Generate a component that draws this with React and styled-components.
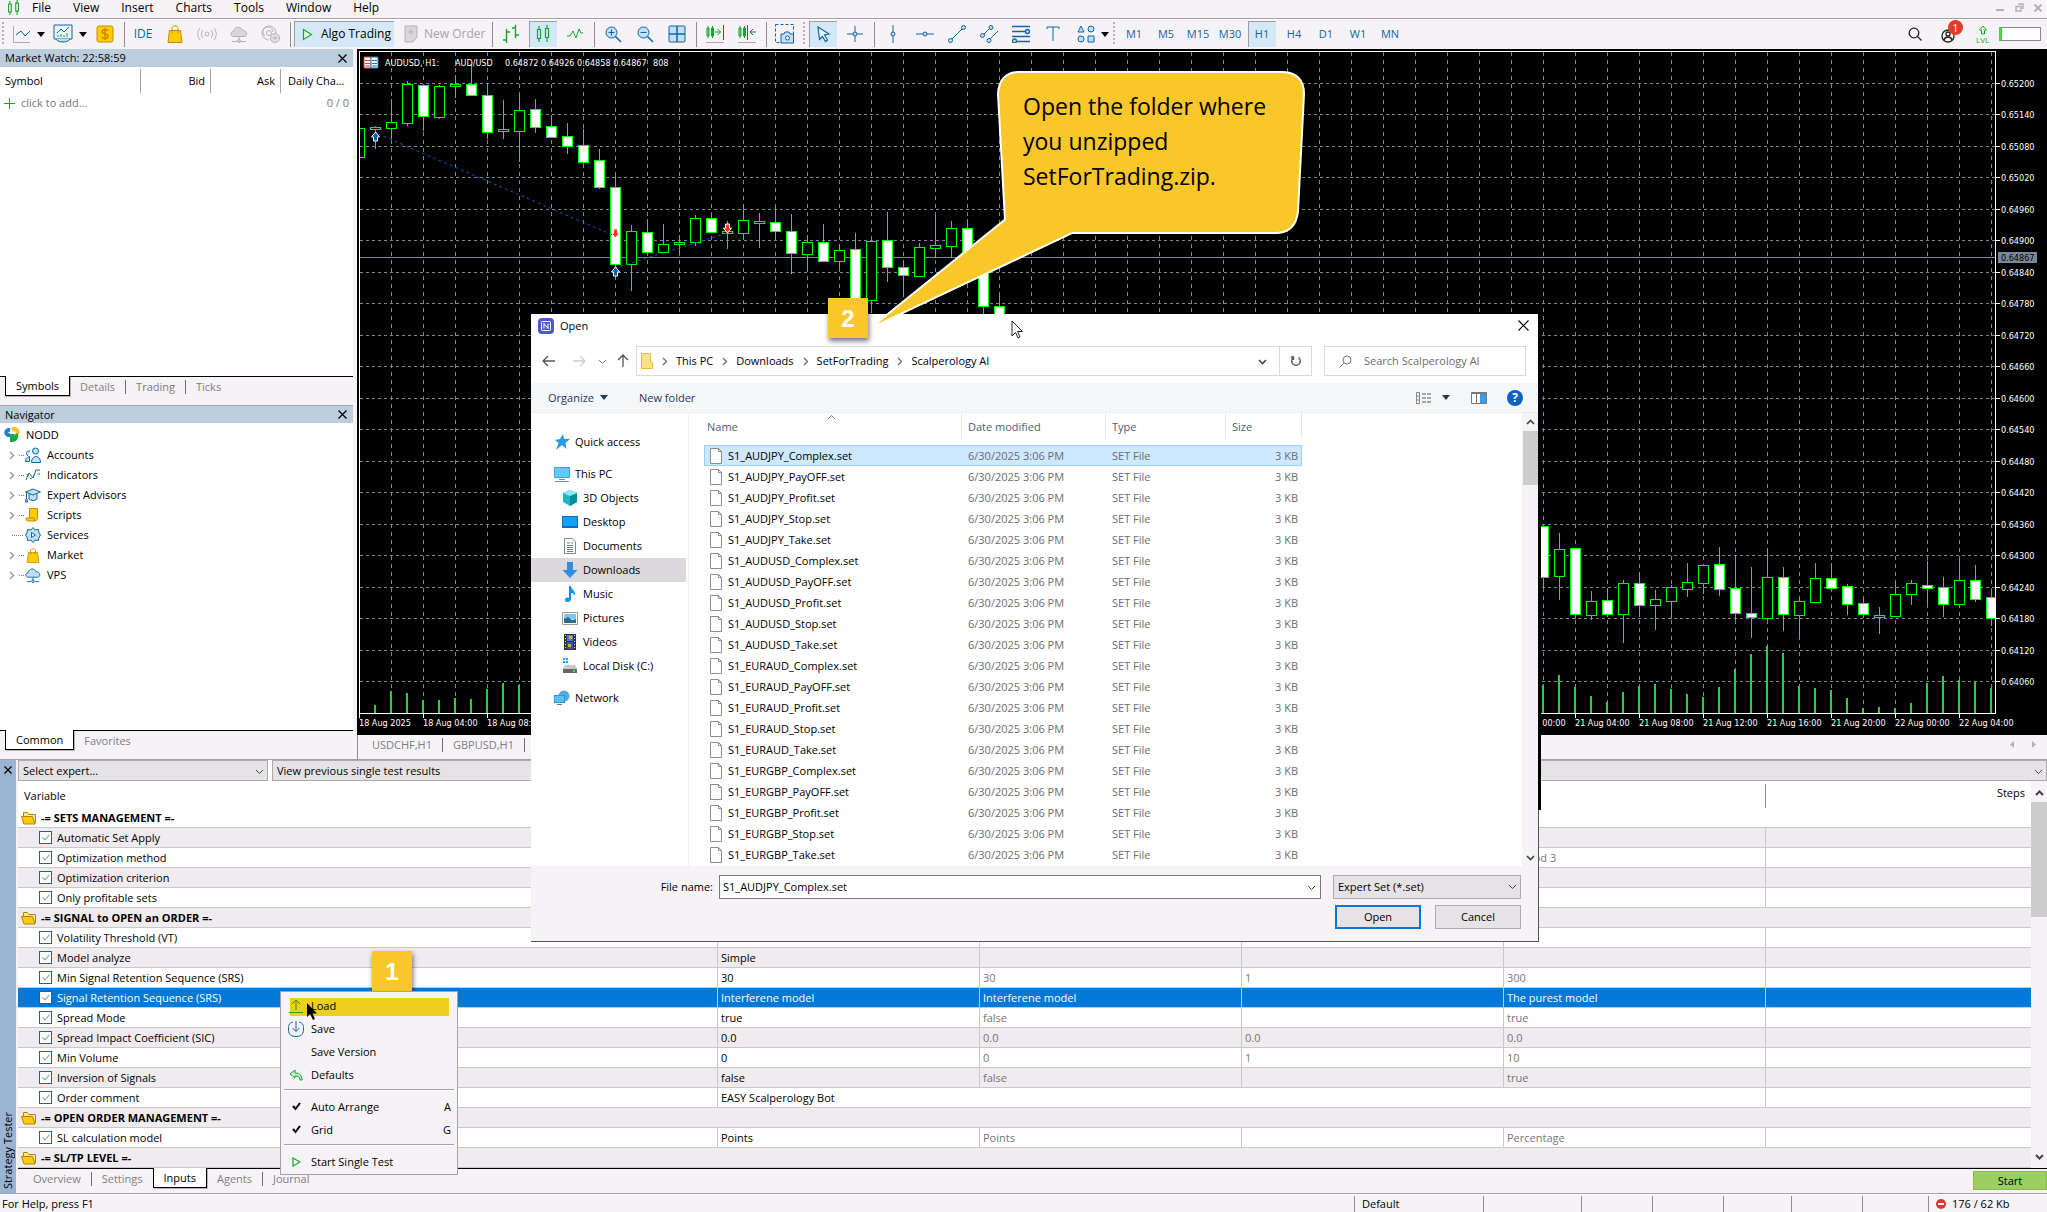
import React from 'react';
import styled, { createGlobalStyle, css } from 'styled-components';

const GlobalStyle = createGlobalStyle`
  * {
    box-sizing: border-box;
  }
  body {
    margin: 0;
    background: #f6f3f6;
    color: #000;
    font-family: 'Open Sans', 'Noto Sans', sans-serif;
    font-size: 11px;
    line-height: 16px;
  }
  button, input, select {
    font: inherit;
    color: inherit;
    margin: 0;
    padding: 0;
    border: 0;
    border-radius: 0;
    background: none;
    outline: none;
  }
  table {
    border-collapse: separate;
    border-spacing: 0;
    table-layout: fixed;
  }
  th, td {
    padding: 0;
    font-weight: 400;
    text-align: left;
    white-space: nowrap;
  }
  ul {
    margin: 0;
    padding: 0;
    list-style: none;
  }
  svg {
    display: block;
    flex: none;
  }
`;

const BLUE = '#1464a0';
const GREEN = '#10a828';
const PALE = '#bfe0f8';

/* ---------- shell ---------- */

const Page = styled.div`
  position: relative;
  display: flex;
  flex-direction: column;
  min-height: 100vh;
  overflow: hidden;
`;

const MenuBar = styled.nav`
  display: flex;
  align-items: center;
  height: 20px;
  padding: 0 5px 4px 6px;
  border-bottom: 1px solid #fff;
  box-shadow: inset 0 -1px 0 #a3a1a3;
`;

const MenuItem = styled.button`
  padding: 0 11px;
  font-size: 12px;
  line-height: 16px;
`;

const WindowButtons = styled.div`
  display: flex;
  gap: 10px;
  margin-left: auto;
`;

const ToolBar = styled.div`
  display: flex;
  align-items: center;
  height: 29px;
  padding-bottom: 1px;
`;

const Tool = styled.button`
  display: flex;
  align-items: center;
  justify-content: center;
  width: 28px;
  height: 26px;
  margin: 0 2px;
  color: ${BLUE};
  font-size: ${(p) => (p.$big ? '12px' : '11px')};
  ${(p) => p.$on && css`
    background: #d5e8f8;
    box-shadow: inset 1px 1px 0 #9d9da3;
  `}
`;

const DropTool = styled.button`
  display: flex;
  align-items: center;
  gap: 6px;
  width: ${(p) => p.$w}px;
  height: 26px;
  padding-left: 8px;
`;

const LabelTool = styled.button`
  display: flex;
  align-items: center;
  gap: ${(p) => (p.$on ? 8 : 6)}px;
  width: ${(p) => (p.$on ? 100 : 92)}px;
  height: 26px;
  margin: 0 1px;
  padding-left: 8px;
  font-size: 12px;
  white-space: nowrap;
  color: ${(p) => (p.$on ? '#000' : '#a5a3a5')};
  ${(p) => p.$on && css`
    background: #d5e8f8;
    box-shadow: inset 1px 1px 0 #9d9da3;
  `}
`;

const Split = styled.span`
  width: 6px;
  height: 25px;
  background: linear-gradient(#8f8d90, #8f8d90) center / 1px 100% no-repeat;
`;

const Grip = styled.span`
  width: ${(p) => p.$w || 6}px;
  height: 24px;
  background: repeating-linear-gradient(#b5b3b5 0 2px, transparent 2px 4px) center / 2px 100% no-repeat;
`;

const Spacer = styled.span`
  flex: 1;
`;

const Account = styled.button`
  position: relative;
  width: 22px;
  height: 22px;
  margin: 0 15px 0 17px;
`;

const Badge = styled.span`
  position: absolute;
  top: -3px;
  left: 9px;
  width: 15px;
  height: 15px;
  border-radius: 8px;
  background: #e53a23;
  color: #fff;
  line-height: 15px;
  text-align: center;
`;

const Level = styled.div`
  width: 42px;
  height: 14px;
  margin: 0 6px 0 9px;
  border: 1px solid #8a888a;
  border-left: 3px solid #3ddc3d;
  background: #fff;
`;

const Middle = styled.div`
  display: flex;
  flex: 1;
`;

const Side = styled.aside`
  display: flex;
  flex-direction: column;
  width: 353px;
  margin-right: 4px;
`;

const PanelTitle = styled.h2`
  display: flex;
  align-items: center;
  justify-content: space-between;
  height: 18px;
  margin: 0;
  padding: 0 6px 0 5px;
  background: #bccddd;
  font-size: 11px;
  font-weight: 400;
  border-top: ${(p) => (p.$line ? '1px solid #a3a1a3' : '0')};
`;

const Watch = styled.div`
  height: 309px;
  padding-top: 2px;
  background: #fff;
`;

const WatchTable = styled.table`
  width: 100%;
  th {
    height: 24px;
    padding: 0 5px;
  }
  th + th {
    border-left: 1px solid #a3a1a3;
    text-align: right;
  }
  th:last-child {
    padding: 0 0 0 7px;
    text-align: left;
  }
  td {
    height: 20px;
    padding: 0 4px;
    color: #77757a;
  }
  td:last-child {
    text-align: right;
  }
`;

const AddRow = styled.span`
  display: flex;
  align-items: center;
  gap: 6px;
`;

const Tree = styled.div`
  flex: 1;
  padding-top: 2px;
  background: #fff;
`;

const TreeRow = styled.div`
  display: grid;
  grid-template-columns: ${(p) => (p.$root ? '22px auto' : '12px 6px 22px auto')};
  align-items: center;
  justify-content: start;
  height: 20px;
  padding-left: ${(p) => (p.$root ? 4 : 7)}px;
`;

const Dots = styled.span`
  width: ${(p) => (p.$long ? 11 : 5)}px;
  margin-left: ${(p) => (p.$long ? -7 : 0)}px;
  border-top: 1px dotted #777;
`;

const Tabs = styled.div`
  display: flex;
  align-items: flex-start;
  height: ${(p) => (p.$tall ? 29 : 24)}px;
  padding-left: 5px;
  border-top: ${(p) => (p.$plain ? '0' : '1px solid #000')};
`;

const Tab = styled.button`
  height: 19px;
  padding: 0 10px;
  color: ${(p) => (p.$on ? '#000' : '#807e82')};
  ${(p) => p.$on && css`
    margin-top: -1px;
    height: 20px;
    border: 1px solid #000;
    border-top: 0;
    background: #fff;
    box-shadow: 1px 1px 0 #b5b3b5;
  `}
`;

const TabLine = styled.span`
  width: 1px;
  height: 14px;
  margin-top: 3px;
  background: #706e72;
`;

const ChartArea = styled.main`
  flex: 1;
  min-width: 0;
  background: #f6f3f6;
  svg.chart {
    width: 100%;
    height: 686px;
    background: #000;
  }
`;

const ChartTabs = styled.div`
  display: flex;
  height: 24px;
  padding-left: 4px;
  border-left: 1px solid #8f8d90;
`;

const ChartScroll = styled.div`
  display: flex;
  align-items: center;
  gap: 16px;
  margin: 0 11px 6px auto;
`;

/* ---------- strategy tester ---------- */

const Tester = styled.section`
  display: flex;
  border-top: 1px solid #a3a1a3;
  border-bottom: 1px solid #a3a1a3;
`;

const Strip = styled.div`
  display: flex;
  flex-direction: column;
  align-items: center;
  justify-content: space-between;
  width: 16px;
  padding: 6px 0 4px;
  background: #9cb4d4;
  span {
    writing-mode: vertical-rl;
    transform: rotate(180deg);
  }
`;

const TesterMain = styled.div`
  flex: 1;
  min-width: 0;
  padding-left: 2px;
`;

const Pickers = styled.div`
  display: flex;
  gap: 4px;
  background: #fff;
`;

const SelectBox = styled.label`
  display: flex;
  position: relative;
  flex: ${(p) => (p.$w ? `0 0 ${p.$w}px` : '1')};
  select {
    appearance: none;
    width: 100%;
    height: ${(p) => p.$h || 21}px;
    padding-left: 4px;
    border: 1px solid #adabad;
    background: #e6e3e6;
  }
  svg {
    position: absolute;
    right: 4px;
    top: 7px;
  }
`;

const Inputs = styled.div`
  display: flex;
  background: #fff;
`;

const InputTable = styled.table`
  flex: 1;
  width: 100%;
  th {
    height: 27px;
    padding: 3px 6px 0;
  }
  th:last-child {
    text-align: right;
  }
  th:last-child::before {
    content: '';
    float: left;
    width: 1px;
    height: 24px;
    margin: -1px 0 0 -6px;
    background: #8f8d90;
  }
`;

const Row = styled.tr`
  background: ${(p) => (p.$selected ? '#0478d7' : p.$odd ? '#efebef' : '#fff')};
  color: ${(p) => (p.$selected ? '#fff' : '#000')};
  td {
    height: 20px;
    padding-left: 3px;
    border-bottom: 1px solid #cac7ca;
  }
  td + td {
    border-left: 1px solid #cac7ca;
  }
  td:nth-child(n + 3) {
    color: ${(p) => (p.$selected ? '#fff' : '#77757a')};
  }
`;

const Group = styled.div`
  display: flex;
  align-items: center;
  gap: 4px;
  font-weight: 700;
`;

const Check = styled.label`
  display: flex;
  align-items: center;
  gap: 5px;
  padding-left: 18px;
  input {
    appearance: none;
    position: relative;
    width: 13px;
    height: 13px;
    border: 1px solid ${BLUE};
    background: #fff;
  }
  input:checked::after {
    content: '';
    position: absolute;
    left: 4px;
    top: 1px;
    width: 3px;
    height: 6px;
    border: solid #9a989c;
    border-width: 0 1px 1px 0;
    transform: rotate(42deg);
  }
`;

const Scroll = styled.div`
  display: flex;
  flex-direction: column;
  align-items: center;
  width: 16px;
  padding: ${(p) => (p.$inset ? 3 : 0)}px 0 ${(p) => (p.$inset ? 3 : 0)}px;
  background: #f6f3f6;
  svg {
    margin: 5px 0 4px;
  }
  i {
    width: ${(p) => (p.$inset ? 16 : 15)}px;
    height: ${(p) => p.$thumb}px;
    margin-bottom: auto;
    background: #cdcdcd;
  }
`;

const TesterFoot = styled.div`
  display: flex;
  border-top: 1px solid #000;
  & > div {
    flex: 1;
  }
`;

const StartButton = styled.button`
  width: 74px;
  height: 19px;
  margin-top: 2px;
  border: 1px solid #86c04a;
  background: #9ccf62;
`;

const Status = styled.footer`
  display: flex;
  align-items: center;
  height: 18px;
  padding-left: 2px;
  border-top: 1px solid #fff;
`;

const StatusCell = styled.span`
  display: flex;
  align-items: center;
  gap: 6px;
  width: ${(p) => p.$w}px;
  height: 16px;
  padding-left: 7px;
  border-left: 1px solid #8f8d90;
`;

/* ---------- floating parts ---------- */

const Popup = styled.div`
  position: absolute;
  left: 280px;
  top: 991px;
  width: 178px;
  padding: 2px 3px 1px;
  border: 1px solid #a3a1a3;
  background: #f6f3f6;
`;

const PopupItem = styled.button`
  display: flex;
  align-items: center;
  width: 100%;
  height: 23px;
  padding-right: 3px;
  i {
    display: flex;
    justify-content: center;
    width: 26px;
    margin-right: 1px;
    padding-right: 2px;
  }
  ${(p) => p.$hot && css`
    background: linear-gradient(#edd01c, #edd01c) 6px 4px / 159px 18px no-repeat;
  `}
  kbd {
    margin-left: auto;
    font: inherit;
  }
`;

const PopupLine = styled.hr`
  height: 2px;
  margin: 3px 0 4px;
  border: 0;
  border-top: 1px solid #a3a1a3;
  border-bottom: 1px solid #fff;
`;

const Pin = styled.div`
  position: absolute;
  left: ${(p) => p.$x}px;
  top: ${(p) => p.$y}px;
  width: 40px;
  height: 40px;
  background: #f9c72a;
  box-shadow: 1px 3px 5px rgba(0, 0, 0, 0.55);
  color: #fff;
  font: 700 24px/41px 'Liberation Sans', sans-serif;
  text-align: center;
`;

const Callout = styled.div`
  position: absolute;
  left: 870px;
  top: 66px;
  width: 440px;
  height: 264px;
  svg {
    position: absolute;
    inset: 0;
    overflow: visible;
  }
  p {
    position: relative;
    width: 260px;
    margin: 0 0 0 153px;
    padding-top: 23px;
    font-size: 23px;
    font-weight: 500;
    line-height: 35px;
  }
`;

const Pointer = styled.svg`
  position: absolute;
  left: ${(p) => p.$x}px;
  top: ${(p) => p.$y}px;
`;

const Dialog = styled.section`
  position: absolute;
  left: 531px;
  top: 314px;
  width: 1008px;
  border-right: 1px solid #555;
  border-bottom: 1px solid #555;
  background: #fff;
  &::after {
    content: '';
    position: absolute;
    left: 100%;
    top: 0;
    width: 3px;
    height: 496px;
    background: #000;
  }
`;

const DialogTitle = styled.header`
  display: flex;
  align-items: center;
  gap: 6px;
  height: 32px;
  padding: 0 9px 9px 7px;
  button {
    margin-left: auto;
  }
`;

const Address = styled.div`
  display: flex;
  align-items: center;
  height: 30px;
  margin-bottom: 7px;
  padding: 0 12px 0 11px;
`;

const NavButton = styled.button`
  width: ${(p) => p.$w}px;
  height: 20px;
  display: flex;
  align-items: center;
`;

const Crumbs = styled.div`
  display: flex;
  align-items: center;
  flex: 1;
  height: 30px;
  margin-right: 12px;
  padding-left: 4px;
  border: 1px solid #d9d9d9;
  a {
    color: inherit;
    text-decoration: none;
  }
  & > svg + svg, & > a + svg {
    margin: 0 7px;
  }
`;

const CrumbEnd = styled.button`
  display: flex;
  align-items: center;
  justify-content: center;
  width: ${(p) => (p.$first ? 33 : 32)}px;
  height: 28px;
  margin-left: ${(p) => (p.$first ? 'auto' : 0)};
  border-left: ${(p) => (p.$first ? '0' : '1px solid #d9d9d9')};
`;

const Search = styled.label`
  display: flex;
  align-items: center;
  gap: 12px;
  width: 202px;
  height: 30px;
  padding-left: 14px;
  border: 1px solid #d9d9d9;
  input {
    width: 150px;
  }
  input::placeholder {
    color: #6d6d6d;
    opacity: 1;
  }
`;

const Commands = styled.div`
  display: flex;
  align-items: center;
  height: 30px;
  padding: 0 15px 0 17px;
  background: #f5f6f7;
  border-bottom: 1px solid #ececee;
  color: #1e395b;
  button {
    display: flex;
    align-items: center;
    gap: 6px;
    margin-right: 31px;
  }
  button:nth-child(4) {
    gap: 10px;
    margin-right: 21px;
  }
  button:nth-child(5) {
    margin-right: 20px;
  }
  button:last-child {
    margin-right: 0;
  }
`;

const Body = styled.div`
  display: flex;
  height: 453px;
`;

const Places = styled.ul`
  width: 158px;
  padding-top: 17px;
  border-right: 1px solid #f2f2f2;
`;

const Place = styled.li`
  display: flex;
  align-items: center;
  gap: 5px;
  width: 155px;
  height: 24px;
  margin-top: ${(p) => (p.$gap ? 8 : 0)}px;
  padding-left: ${(p) => (p.$deep ? 31 : 23)}px;
  background: ${(p) => (p.$on ? '#dcd9dc' : 'none')};
`;

const Files = styled.table`
  width: 598px;
  margin: 0 auto 0 15px;
  align-self: flex-start;
  td {
    height: 21px;
    padding-left: 6px;
    color: #6d6d6d;
  }
  td:first-child {
    color: #000;
  }
  td:last-child {
    padding-right: 4px;
    text-align: right;
  }
`;

const HeadCell = styled.div`
  position: relative;
  height: 25px;
  margin-bottom: 7px;
  padding: 6px 0 0 ${(p) => (p.$first ? 3 : 6)}px;
  border-right: 1px solid #e3e3e3;
  color: #4c607a;
  svg {
    position: absolute;
    left: calc(50% - 6px);
    top: 0;
  }
`;

const FileRow = styled.tr`
  ${(p) => p.$on && css`
    background: #cde8ff;
    outline: 1px solid #99d1ff;
    outline-offset: -1px;
  `}
`;

const FileName = styled.span`
  display: flex;
  align-items: center;
  gap: 6px;
`;

const DialogFoot = styled.footer`
  padding: 9px 17px 12px 0;
  background: #f6f3f6;
`;

const FootLine = styled.div`
  display: flex;
  align-items: center;
  justify-content: flex-end;
  gap: ${(p) => p.$gap}px;
  margin-bottom: ${(p) => (p.$last ? 0 : 6)}px;
`;

const NameBox = styled.label`
  display: flex;
  align-items: center;
  gap: 6px;
  span {
    display: flex;
    align-items: center;
    width: 602px;
    height: 24px;
    padding: 0 4px 0 3px;
    border: 1px solid #7a7a7a;
    background: #fff;
  }
  input {
    flex: 1;
  }
`;

const DialogButton = styled.button`
  width: 86px;
  height: 24px;
  border: ${(p) => (p.$main ? '2px solid #0078d7' : '1px solid #adadad')};
  background: #e6e3e6;
`;

/* ---------- icons ---------- */

const Icon = ({ w = 18, h = 18, stroke = BLUE, fill = 'none', sw = 1, children }) => (
  <svg width={w} height={h} viewBox={`0 0 ${w} ${h}`} fill={fill} stroke={stroke} strokeWidth={sw}>
    {children}
  </svg>
);

const Caret = ({ color = '#000' }) => (
  <Icon w={8} h={5} stroke="none" fill={color}><path d="M0 0h8L4 5z" /></Icon>
);

const Chevron = ({ dir = 'down', color = '#444', sw = 1 }) => {
  const turn = { down: 0, up: 180, right: -90, left: 90 }[dir];
  return (
    <Icon w={9} h={9} stroke={color} sw={sw}>
      <path d="M1 3l3.500 3.500L8 3" transform={`rotate(${turn} 4.500 4.500)`} />
    </Icon>
  );
};

const Cross = ({ size = 9, color = '#000', sw = 1.3 }) => (
  <Icon w={size} h={size} stroke={color} sw={sw}>
    <path d={`M.5 .5L${size - 0.5} ${size - 0.5}M${size - 0.5} .5L.5 ${size - 0.5}`} />
  </Icon>
);

const Candles = ({ w = 14, h = 18 }) => (
  <svg width={w} height={h} viewBox="0 0 14 18" fill="none" stroke={GREEN} strokeWidth="1.200">
    <path d="M1.500 4.500h3v9h-3zM3 1v3.500M3 13.500V17M9.500 3.500h3v9h-3zM11 0v3.500M11 12.500V17" />
  </svg>
);

const Play = () => (
  <Icon w={11} h={13} stroke={GREEN} sw={1.2}><path d="M1.500 1.500v10l8-5z" fill="#e5f9e8" /></Icon>
);

const Bag = ({ w = 16, h = 18 }) => (
  <svg width={w} height={h} viewBox="0 0 16 18" fill="#fc0" stroke="#c98a00">
    <path d="M2.500 5.500h11l1.500 12H1z" />
    <path d="M5 8V3.500C5 0 11 0 11 3.500V8" fill="none" />
  </svg>
);

const CloudIcon = ({ color = BLUE, fill = PALE, size = 18 }) => (
  <svg width={size} height={size} viewBox="0 0 18 18" stroke={color} fill={fill}>
    <path d="M4 11.500C0 11.500 0 6.500 3.500 6.500 4 1.500 11 .5 12.500 5.500c5-.5 5.500 6 1.500 6z" />
    <path d="M9 12v3M2 16.500h5M11 16.500h5" />
    <circle cx="9" cy="16" r="1.500" />
  </svg>
);

const Lens = ({ sign }) => (
  <Icon>
    <circle cx="7.500" cy="7.500" r="5.500" fill={PALE} />
    <path d="M11.500 11.500L17 17" strokeWidth="1.600" />
    <path d={sign === '+' ? 'M4.500 7.500h6M7.500 4.500v6' : 'M4.500 7.500h6'} />
  </Icon>
);

const Folder = () => (
  <Icon w={16} h={14} stroke="#b98500" fill="#fc0">
    <path d="M2.500 11V1.500h4l1.500 2h6.500V12" fill="#f4e3ad" />
    <path d="M.5 5.500h11l2.500 7.500H3z" />
  </Icon>
);

const PageIcon = () => (
  <Icon w={12} h={16} stroke="#8d8d8d" fill="#fff"><path d="M.5 .5h8l3 3v12H.5zM8.500 .5v3h3" /></Icon>
);

const Tick = () => (
  <Icon w={9} h={9} stroke="#000" sw={2}><path d="M1 4l2.500 3L8 1" /></Icon>
);

const Arrow = ({ d, color = '#555', sw = 1.3 }) => (
  <Icon w={14} h={14} stroke={color} sw={sw}><path d={d} /></Icon>
);

const placeIcons = {
  'Quick access': <path d="M9 0l1 5h6l-4.500 4L12.500 15 8 11l-6 5 2.500-7L1 6l5-1z" fill="#2c98e8" />,
  'This PC': (
    <>
      <path d="M0 1h16v11H0z" fill="#35a8e0" />
      <path d="M1 2h14v9H1z" fill="#62c8f5" />
      <path d="M5 13h6v1H5zM1 15h14v1H1z" fill="#789" />
    </>
  ),
  '3D Objects': (
    <>
      <path d="M8 0l7 3v9l-7 4-7-4V3z" fill="#1cb8c8" />
      <path d="M8 6l7-3v9l-7 4z" fill="#0a8ca0" />
      <path d="M8 0l7 3-7 3-7-3z" fill="#8de8ee" />
    </>
  ),
  Desktop: (
    <>
      <path d="M0 2h16v12H0z" fill="#0a6fc0" />
      <path d="M1 3h14v9H1z" fill="#14a0f8" />
    </>
  ),
  Documents: (
    <>
      <path d="M2.500 .5h8l3 3v12h-11z" fill="#fff" stroke="#888" />
      <path d="M5 5h3M5 7.500h6M5 9.500h6M5 11.500h6M5 13.500h6M9 5h2" stroke="#3b8fd0" />
    </>
  ),
  Downloads: <path d="M5 0h6v8h4.500L8 16 .5 8H5z" fill="#2f8ee0" />,
  Music: <path d="M7 0h2c0 4 5 4 4 10-1-3-3-3-4-3v6c0 4-6 4-6 1 0-2 2-3 4-2z" fill="#0c93ea" />,
  Pictures: (
    <>
      <path d="M.5 2.500h15v12H.5z" fill="#fff" stroke="#999" />
      <path d="M2 4h12v5H2z" fill="#7cc4f2" />
      <path d="M2 9l4-2 4 3 4-1v4H2z" fill="#2c6b8c" />
    </>
  ),
  Videos: (
    <>
      <path d="M2 0h12v16H2z" fill="#333" />
      <path d="M5 1h6v6H5z" fill="#3f7de0" />
      <path d="M5 8h6v7H5z" fill="#3450c8" />
      <path d="M7 2h3v3H7zM6 10h3v3H6z" fill="#e0b030" />
      <path d="M3.500 1v15M12.500 1v15" stroke="#ddd" strokeDasharray="1 2" />
    </>
  ),
  'Local Disk (C:)': (
    <>
      <path d="M1 0h2v2H1zM4 0h2v2H4zM1 3h2v2H1zM4 3h2v2H4z" fill="#14a8f0" />
      <path d="M3 7h10l2 4H1z" fill="#c8c8c8" />
      <path d="M1 11h14v4H1z" fill="#666" />
      <path d="M11 12h2v2h-2z" fill="#4be04b" />
    </>
  ),
  Network: (
    <>
      <circle cx="10" cy="6" r="5.500" fill="#5aa8d8" />
      <path d="M0 5h11v8H0z" fill="#2a96e0" />
      <path d="M1 6h9v6H1z" fill="#58c0f4" />
      <path d="M3 14h5v1H3z" fill="#678" />
    </>
  ),
};

const treeIcons = {
  Accounts: (
    <>
      <circle cx="10.500" cy="4" r="3" />
      <path d="M6.500 15.500c0-8 9-8 9 0zM3 9c-3-2-1-6 2-5M.5 14.500c0-3 1-4 4-5v5z" />
    </>
  ),
  Indicators: (
    <>
      <path d="M1 13l3-7 4 5 3-8h4" fill="none" />
      <path d="M2 7l4 5 4-5 5 0" fill="none" stroke={GREEN} strokeDasharray="3 2" />
    </>
  ),
  'Expert Advisors': (
    <>
      <path d="M4 7v5c2 2 6 2 8 0V7" />
      <path d="M.5 5L8 2l7.500 3L8 8z" />
      <path d="M1.500 6v6M1 12l-.5 3h2l-.5-3" />
    </>
  ),
  Scripts: (
    <path d="M4.500 1.500h8v9c0 4-3 3.500-4 3.500H3c-2.500 0-2-3-2-3h3.500zM5 11h4c0 2 1 3 1.500 3" fill="#fc0" stroke="#c98a00" />
  ),
  Services: (
    <>
      <path d="M8 .5l2 2.500 3.500-.5L14 6l1.500 2L14 10l-.5 3.500L10 13l-2 2.500L6 13l-3.500.5L2 10 .5 8 2 6l.5-3.500L6 3z" />
      <path d="M6.500 5.500v5l4-2.500z" fill="#fff" />
    </>
  ),
};

/* ---------- data ---------- */

const menus = ['File', 'View', 'Insert', 'Charts', 'Tools', 'Window', 'Help'];
const frames = ['M1', 'M5', 'M15', 'M30', 'H1', 'H4', 'D1', 'W1', 'MN'];
const tree = ['Accounts', 'Indicators', 'Expert Advisors', 'Scripts', 'Services', 'Market', 'VPS'];
const places = Object.keys(placeIcons);
const files = ['AUDJPY', 'AUDUSD', 'EURAUD', 'EURGBP'].flatMap((pair) => (
  ['Complex', 'PayOFF', 'Profit', 'Stop', 'Take'].map((kind) => `S1_${pair}_${kind}.set`)
));

const inputs = [
  { group: '-= SETS MANAGEMENT =-' },
  { name: 'Automatic Set Apply', values: ['', '', '', ''] },
  { name: 'Optimization method', values: ['', '', '', 'Method 3'] },
  { name: 'Optimization criterion', values: ['', '', '', ''] },
  { name: 'Only profitable sets', values: ['', '', '', ''] },
  { group: '-= SIGNAL to OPEN an ORDER =-' },
  { name: 'Volatility Threshold (VT)', values: ['', '', '', ''] },
  { name: 'Model analyze', values: ['Simple', '', '', ''] },
  { name: 'Min Signal Retention Sequence (SRS)', values: ['30', '30', '1', '300'] },
  { name: 'Signal Retention Sequence (SRS)', values: ['Interferene model', 'Interferene model', '', 'The purest model'], selected: true },
  { name: 'Spread Mode', values: ['true', 'false', '', 'true'] },
  { name: 'Spread Impact Coefficient (SIC)', values: ['0.0', '0.0', '0.0', '0.0'] },
  { name: 'Min Volume', values: ['0', '0', '1', '10'] },
  { name: 'Inversion of Signals', values: ['false', 'false', '', 'true'] },
  { name: 'Order comment', wide: 'EASY Scalperology Bot' },
  { group: '-= OPEN ORDER MANAGEMENT =-' },
  { name: 'SL calculation model', values: ['Points', 'Points', '', 'Percentage'] },
  { group: '-= SL/TP LEVEL =-' },
];

// high, body top, body bottom, low, filled
const leftCandles = [
  [126, 127, 129, 148, 0], [99, 122, 128, 138, 0], [81, 84, 123, 125, 0], [85, 85, 116, 130, 1],
  [85, 86, 117, 118, 0], [75, 84, 86, 97, 0], [64, 84, 95, 95, 1], [83, 95, 132, 138, 1],
  [100, 129, 131, 138, 0], [95, 110, 131, 161, 0], [99, 109, 127, 132, 1], [115, 126, 137, 137, 1],
  [123, 136, 146, 153, 1], [129, 145, 162, 163, 1], [149, 160, 187, 188, 1], [176, 187, 264, 278, 1],
  [225, 231, 264, 290, 0], [219, 232, 252, 253, 1], [224, 244, 252, 252, 0], [235, 242, 244, 253, 0],
  [215, 218, 242, 245, 0], [215, 218, 232, 232, 1], [221, 231, 233, 248, 0], [205, 220, 233, 238, 0],
  [213, 221, 223, 247, 0], [207, 222, 231, 239, 1], [214, 231, 253, 273, 1], [235, 242, 254, 270, 0],
  [224, 242, 261, 261, 1], [244, 250, 261, 269, 0], [233, 249, 298, 310, 1], [240, 241, 300, 312, 0],
  [212, 240, 267, 281, 1], [261, 267, 275, 296, 1], [243, 247, 276, 276, 0], [215, 245, 248, 257, 0],
  [221, 228, 246, 257, 0], [219, 228, 262, 270, 1], [250, 255, 306, 315, 1], [296, 306, 330, 330, 1],
];
const rightCandles = [
  [525, 526, 577, 587, 1], [533, 549, 576, 599, 0], [548, 548, 614, 618, 1], [591, 601, 615, 619, 0],
  [588, 600, 614, 616, 1], [580, 583, 614, 642, 0], [573, 583, 605, 616, 1], [590, 599, 605, 629, 0],
  [585, 587, 601, 618, 0], [563, 582, 589, 596, 0], [565, 565, 583, 593, 0], [547, 564, 589, 595, 1],
  [555, 588, 613, 619, 1], [567, 613, 617, 637, 1], [549, 577, 618, 619, 0], [567, 577, 614, 630, 1],
  [598, 601, 615, 637, 0], [563, 578, 602, 602, 0], [563, 578, 588, 589, 1], [584, 586, 604, 614, 1],
  [599, 603, 614, 617, 1], [607, 615, 617, 633, 0], [582, 594, 616, 616, 0], [580, 583, 594, 604, 0],
  [561, 585, 588, 604, 1], [577, 587, 604, 616, 1], [559, 580, 604, 607, 0], [565, 580, 599, 601, 1],
  [590, 597, 618, 625, 1],
];
const leftVolumes = [705, 691, 693, 700, 700, 698, 699, 689, 683, 685];
const rightVolumes = [
  685, 675, 687, 696, 702, 692, 686, 684, 689, 694, 697, 687, 669, 654, 646, 653, 686, 688, 690,
  698, 708, 707, 708, 703, 683, 676, 680, 682, 688,
];
const times = [
  [359, '18 Aug 2025'], [423, '18 Aug 04:00'], [487, '18 Aug 08:00'], [1511, '21 Aug 00:00'],
  [1575, '21 Aug 04:00'], [1639, '21 Aug 08:00'], [1703, '21 Aug 12:00'], [1767, '21 Aug 16:00'],
  [1831, '21 Aug 20:00'], [1895, '22 Aug 00:00'], [1959, '22 Aug 04:00'],
];
const range = (n) => Array.from({ length: n }, (_, i) => i);

/* ---------- chart ---------- */

function CandleRun({ start, list }) {
  return list.map(([high, top, bottom, low, filled], i) => {
    const x = start + i * 16;
    return (
      <g key={x}>
        <path d={`M${x + 0.5} ${high}V${top}M${x + 0.5} ${bottom}V${low + 1}`} stroke="#0f0" />
        <rect x={x - 4.5} y={top + 0.5} width="10" height={bottom - top} fill={filled ? '#fff' : '#000'} stroke="#0f0" />
      </g>
    );
  });
}

function VolumeRun({ start, list }) {
  return list.map((top, i) => (
    <rect key={start + i * 16} x={start + i * 16 - 1} y={top} width="2" height={713 - top} fill="#32cd32" />
  ));
}

function Trade({ x, y, up }) {
  return (
    <path
      d={up ? 'M0 -5L4 0H2V4H-2V0H-4z' : 'M0 5L4 0H2V-4H-2V0H-4z'}
      transform={`translate(${x} ${y})`}
      fill={up ? '#0a5cb8' : '#f03c14'}
      stroke="#fff"
    />
  );
}

function Chart() {
  return (
    <svg className="chart" fontFamily="'DejaVu Sans Condensed', 'Open Sans', sans-serif" fontSize="9">
      <g transform="translate(-357 -49)">
        <g stroke="#778899" shapeRendering="crispEdges">
          {range(20).map((i) => {
            const y = Math.floor(83 + i * 31.5) + 0.5;
            return <path key={i} d={`M360 ${y}H1995`} strokeDasharray="3 3" />;
          })}
          {range(51).map((i) => <path key={i} d={`M${391.5 + i * 32} 52V713`} strokeDasharray="4 4" />)}
        </g>
        <g shapeRendering="crispEdges" fill="none">
          <path d="M360 257.500H1995" stroke="#778899" />
          <path d="M360 128.500h4.500v29H360" stroke="#0f0" />
          <CandleRun start={375} list={leftCandles} />
          <CandleRun start={1543} list={rightCandles} />
          <VolumeRun start={375} list={leftVolumes} />
          <VolumeRun start={1543} list={rightVolumes} />
        </g>
        <path d="M378 134L615 236M615 268L727 233" stroke="#0a5cb8" strokeDasharray="3 3" />
        <Trade x={375.5} y={137} up />
        <Trade x={615.5} y={233} />
        <Trade x={615.5} y={272} up />
        <Trade x={727.5} y={228} />
        <rect x="1995" y="49" width="2000" height="700" fill="#000" />
        <path d="M359.500 713V51.500H1995.500V713.500H359" stroke="#fff" fill="none" shapeRendering="crispEdges" />
        <g fill="#fff">
          {range(20).map((i) => {
            const y = Math.floor(83 + i * 31.5);
            return (
              <g key={i}>
                <rect x="1996" y={y} width="4" height="1" />
                <text x="2001" y={y + 4}>{(0.652 - i * 0.0006).toFixed(5)}</text>
              </g>
            );
          })}
          {times.map(([x, label]) => (
            <g key={x}>
              <rect x={x} y="714" width="1" height="4" />
              <text x={x} y="726">{label}</text>
            </g>
          ))}
          <text x="385" y="66">AUDUSD, H1:</text>
          <text x="455" y="66">AUD/USD</text>
          <text x="505" y="66">0.64872 0.64926 0.64858 0.64867</text>
          <text x="653" y="66">808</text>
        </g>
        <rect x="1998" y="252" width="39" height="11" fill="#778899" />
        <text x="2001" y="261" fill="#000">0.64867</text>
        <path d="M364 57h7v11h-7z" fill="#fff" stroke="#e04030" />
        <path d="M371 57h7v11h-7z" fill="#fff" stroke="#2070c0" />
        <path d="M365 60.500h5M365 63.500h5M365 66h5" stroke="#e04030" />
        <path d="M372 60.500h5M372 63.500h5M372 66h5" stroke="#2070c0" />
      </g>
    </svg>
  );
}

/* ---------- sections ---------- */

function TopBars() {
  return (
    <>
      <MenuBar>
        <Candles w={15} h={16} />
        {menus.map((m) => <MenuItem key={m} type="button">{m}</MenuItem>)}
        <WindowButtons>
          <button type="button" aria-label="Minimize"><Icon w={9} h={9} stroke="#b3b1b3" sw={2}><path d="M0 7h8" /></Icon></button>
          <button type="button" aria-label="Restore"><Icon w={9} h={9} stroke="#b3b1b3" sw={1.5}><path d="M1 3.500h5v4.500H1zM3 1h5v5" /></Icon></button>
          <button type="button" aria-label="Close"><Cross size={8} color="#b3b1b3" sw={2} /></button>
        </WindowButtons>
      </MenuBar>
      <ToolBar>
        <Grip $w={5} />
        <DropTool $w={40} type="button" aria-label="Line chart">
          <Icon><path d="M.5 1v16.500H17" stroke="#aaa" /><path d="M3 10l5-4 4 5 5-5" /></Icon>
          <Caret />
        </DropTool>
        <DropTool $w={44} type="button" aria-label="Indicators">
          <Icon w={20} h={20}>
            <path d="M1 1h18v14H1z" fill="#e8f5ff" /><path d="M3 15c2 4 12 4 14 0" fill={PALE} />
            <path d="M4 9l4-4 3 3 5-5" /><path d="M5 13v-2M8 13v-3M11 13v-2M14 13V9" stroke={GREEN} />
          </Icon>
          <Caret />
        </DropTool>
        <Tool type="button" aria-label="Trading">
          <Icon stroke="#c98a00" fill="#fc0">
            <rect x="1" y="1" width="16" height="16" rx="2" />
            <path d="M12 6c-1-2-6-2-6 .5C6 9.500 12 8 12 11.500c0 3-5.500 2.500-6 .5M9 3v12" fill="none" strokeWidth="1.400" />
          </Icon>
        </Tool>
        <Split />
        <Tool type="button" $big>IDE</Tool>
        <Tool type="button" aria-label="Market"><Bag /></Tool>
        <Tool type="button" aria-label="Signals">
          <Icon w={20} stroke="#b3b1b3">
            <circle cx="10" cy="9" r="2" /><path d="M6 5C4 7.500 4 10.500 6 13M14 5c2 2.500 2 5.500 0 8M3 3c-3 4-3 8 0 12M17 3c3 4 3 8 0 12" />
          </Icon>
        </Tool>
        <Tool type="button" aria-label="Hosting"><CloudIcon color="#b3b1b3" fill="#d9d7d9" /></Tool>
        <Tool type="button" aria-label="Cloud network">
          <Icon w={20} stroke="#b3b1b3">
            <circle cx="8" cy="8" r="2.500" /><path d="M8 15A7 7 0 1 1 15 8M8 11.500M4 11a5 5 0 1 1 8-4" />
            <circle cx="14" cy="13" r="4.500" fill="#e6e4e6" /><path d="M11.500 13h5M14 10.500v5" />
          </Icon>
        </Tool>
        <Split />
        <LabelTool type="button" $on><Play />Algo Trading</LabelTool>
        <LabelTool type="button">
          <Icon w={14} stroke="#b3b1b3" fill="#d9d7d9"><path d="M1 1h12v11l-4 5H1z" /><path d="M4 7h6M7 4v6" /></Icon>
          New Order
        </LabelTool>
        <Split />
        <Tool type="button" aria-label="Bar chart">
          <Icon stroke={GREEN} sw={1.4}><path d="M4.500 4v14M1 15h3.500M4.500 7H8M13.500 0v13M10 3h3.500M13.500 10H17" /></Icon>
        </Tool>
        <Tool type="button" aria-label="Candlesticks" $on><Candles /></Tool>
        <Tool type="button" aria-label="Line"><Icon stroke={GREEN}><path d="M1 11h3l3-5 3 7 3-9 2 4h2" /></Icon></Tool>
        <Split />
        <Tool type="button" aria-label="Zoom in"><Lens sign="+" /></Tool>
        <Tool type="button" aria-label="Zoom out"><Lens sign="-" /></Tool>
        <Tool type="button" aria-label="Tile"><Icon><rect x="1" y="1" width="16" height="16" rx="1" fill={PALE} /><path d="M9 1v16M1 9h16" strokeWidth="1.500" /></Icon></Tool>
        <Split />
        <Tool type="button" aria-label="Auto scroll">
          <Icon w={20} h={20}><path d="M2 4h2v8H2zM3 2v12M6.500 4h2v8h-2zM7.500 2v12M9.500 8h6m-3-3l3 3-3 3" stroke={GREEN} /><path d="M18.500 1v15" /><path d="M1 18.500h18" stroke="#aaa" /></Icon>
        </Tool>
        <Tool type="button" aria-label="Chart shift">
          <Icon w={20} h={20}><path d="M2 4h2v8H2zM3 2v12M6.500 4h2v8h-2zM7.500 2v12" stroke={GREEN} /><path d="M10.500 1v15M19 8h-6m3-3l-3 3 3 3" /><path d="M1 18.500h18" stroke="#aaa" /></Icon>
        </Tool>
        <Split />
        <Tool type="button" aria-label="Screenshot">
          <Icon w={20} h={20}><path d="M.5 .5h18v18H.5z" strokeDasharray="3 2" /><path d="M6 10h3l1-2h4l1 2h3.500v9H6z" fill={PALE} /><circle cx="12.500" cy="14" r="2" fill="#fff" /></Icon>
        </Tool>
        <Grip />
        <Tool type="button" aria-label="Cursor" $on><Icon w={16}><path d="M3 2l11 7-4.500 1 3 5-2 1.500-3-5-3 3z" fill="#e8f5ff" strokeWidth="1.200" /></Icon></Tool>
        <Tool type="button" aria-label="Crosshair"><Icon><path d="M9 1v16M1 9h16" /><circle cx="9" cy="9" r="2" fill={PALE} /></Icon></Tool>
        <Split />
        <Tool type="button" aria-label="Vertical line"><Icon><path d="M9 0v18" /><circle cx="9" cy="9" r="2" fill={PALE} /></Icon></Tool>
        <Tool type="button" aria-label="Horizontal line"><Icon><path d="M0 9h18" /><circle cx="9" cy="9" r="2" fill={PALE} /></Icon></Tool>
        <Tool type="button" aria-label="Trend line"><Icon><path d="M3 15L15 3" /><circle cx="2.500" cy="15.500" r="2" fill={PALE} /><circle cx="15.500" cy="2.500" r="2" fill={PALE} /></Icon></Tool>
        <Tool type="button" aria-label="Channel"><Icon><path d="M3 10l8-8M9 15l9-9" /><circle cx="2.500" cy="10.500" r="2" fill={PALE} /><circle cx="11" cy="2.500" r="2" fill={PALE} /><circle cx="9" cy="15.500" r="2" fill={PALE} /></Icon></Tool>
        <Tool type="button" aria-label="Fibonacci"><Icon sw={1.3}><path d="M0 1.500h18M0 6.500h18M0 11.500h18M0 16.500h18" /><circle cx="15.500" cy="6.500" r="2" fill={PALE} /><circle cx="2.500" cy="16" r="2" fill={PALE} /></Icon></Tool>
        <Tool type="button" aria-label="Text"><Icon w={14}><path d="M1 4V2h12v2M7 2v14" /></Icon></Tool>
        <DropTool $w={41} type="button" aria-label="Shapes">
          <Icon fill={PALE}><path d="M4 1l3 6H1zM11 11h6v6h-6z" /><circle cx="14" cy="4" r="3" /><circle cx="4" cy="14" r="3" /></Icon>
          <Caret />
        </DropTool>
        <Grip $w={8} />
        {frames.map((f) => <Tool key={f} type="button" $on={f === 'H1'}>{f}</Tool>)}
        <Spacer />
        <button type="button" aria-label="Search"><Icon w={14} h={14} stroke="#222" sw={1.3}><circle cx="6" cy="6" r="4.800" /><path d="M9.500 9.500L13.500 13.500" /></Icon></button>
        <Account type="button" aria-label="Account">
          <Icon w={18} h={18} stroke="#222" sw={1.3}><circle cx="9" cy="11" r="6" /><circle cx="9" cy="9" r="2" /><path d="M5 15c1-4 7-4 8 0" /></Icon>
          <Badge>1</Badge>
        </Account>
        <Icon w={14} h={20} stroke={GREEN}>
          <path d="M7 2l3.500 4H8.500v4h-3V6h-2z" />
          <text x="0" y="19" fontSize="8" fill={GREEN} stroke="none">LVL</text>
        </Icon>
        <Level />
      </ToolBar>
    </>
  );
}

function SidePanels() {
  return (
    <Side>
      <PanelTitle>Market Watch: 22:58:59<Cross /></PanelTitle>
      <Watch>
        <WatchTable>
          <colgroup><col /><col width="70" /><col width="70" /><col width="73" /></colgroup>
          <thead>
            <tr><th>Symbol</th><th>Bid</th><th>Ask</th><th>Daily Cha...</th></tr>
          </thead>
          <tbody>
            <tr>
              <td colSpan="3">
                <AddRow><Icon w={11} h={11} stroke={GREEN}><path d="M5.500 0v11M0 5.500h11" /></Icon>click to add...</AddRow>
              </td>
              <td>0 / 0</td>
            </tr>
          </tbody>
        </WatchTable>
      </Watch>
      <Tabs $tall>
        <Tab $on>Symbols</Tab>
        <Tab>Details</Tab>
        <TabLine />
        <Tab>Trading</Tab>
        <TabLine />
        <Tab>Ticks</Tab>
      </Tabs>
      <PanelTitle $line>Navigator<Cross /></PanelTitle>
      <Tree>
        <TreeRow $root>
          <Icon w={16} h={16} sw={4}>
            <path d="M6 3c-5-1-5 6 0 5" stroke="#1b7fe0" />
            <path d="M8 3c3-2 7 0 5 4" stroke="#fbc02d" />
            <path d="M8 7v6c3 0 5-2 4-6" stroke="#18a844" />
          </Icon>
          NODD
        </TreeRow>
        {tree.map((name) => {
          const leaf = name === 'Services';
          return (
            <TreeRow key={name}>
              {leaf ? <span /> : <Chevron dir="right" color="#a09ea2" sw={1.6} />}
              <Dots $long={leaf} />
              {name === 'Market' && <Bag h={15} />}
              {name === 'VPS' && <CloudIcon size={16} />}
              {treeIcons[name] && <Icon w={16} h={16} fill={PALE}>{treeIcons[name]}</Icon>}
              {name}
            </TreeRow>
          );
        })}
      </Tree>
      <Tabs $tall>
        <Tab $on>Common</Tab>
        <Tab>Favorites</Tab>
      </Tabs>
    </Side>
  );
}

function StrategyTester() {
  return (
    <Tester>
      <Strip><Cross size={8} /><span>Strategy Tester</span></Strip>
      <TesterMain>
        <Pickers>
          <SelectBox $w={250}>
            <select aria-label="Expert"><option>Select expert...</option></select>
            <Chevron />
          </SelectBox>
          <SelectBox>
            <select aria-label="Results"><option>View previous single test results</option></select>
            <Chevron />
          </SelectBox>
        </Pickers>
        <Inputs>
          <InputTable>
            <colgroup>
              <col width="699" /><col width="262" /><col width="262" /><col width="262" /><col width="262" /><col />
            </colgroup>
            <thead>
              <tr>
                <th>Variable</th>
                <th aria-label="Value" />
                <th aria-label="Start" />
                <th aria-label="Step" />
                <th aria-label="Stop" />
                <th>Steps</th>
              </tr>
            </thead>
            <tbody>
              {inputs.map((item, i) => (item.group ? (
                <Row key={item.group} $odd={i % 2}>
                  <td colSpan="6"><Group><Folder />{item.group}</Group></td>
                </Row>
              ) : (
                <Row key={item.name} $odd={i % 2} $selected={item.selected}>
                  <td><Check><input type="checkbox" defaultChecked />{item.name}</Check></td>
                  {item.wide && <td colSpan="4">{item.wide}</td>}
                  {/* eslint-disable-next-line react/no-array-index-key */}
                  {item.values && item.values.map((v, n) => <td key={n}>{v}</td>)}
                  <td />
                </Row>
              )))}
            </tbody>
          </InputTable>
          <Scroll $inset $thumb={115}>
            <Chevron dir="up" sw={2} />
            <i />
            <Chevron sw={2} />
          </Scroll>
        </Inputs>
        <TesterFoot>
          <Tabs $plain>
            <Tab>Overview</Tab>
            <TabLine />
            <Tab>Settings</Tab>
            <Tab $on>Inputs</Tab>
            <Tab>Agents</Tab>
            <TabLine />
            <Tab>Journal</Tab>
          </Tabs>
          <StartButton type="button">Start</StartButton>
        </TesterFoot>
      </TesterMain>
    </Tester>
  );
}

function OpenDialog() {
  return (
    <Dialog role="dialog" aria-label="Open">
      <DialogTitle>
        <Icon w={16} h={16} stroke="none" fill="#5058d0">
          <rect width="16" height="16" rx="4" />
          <rect x="3.500" y="3.500" width="9" height="9" rx="1" fill="none" stroke="#fff" />
          <path d="M6 10.500v-5l4 5v-5" fill="none" stroke="#fff" />
        </Icon>
        Open
        <button type="button" aria-label="Close"><Cross size={11} sw={1.1} /></button>
      </DialogTitle>
      <Address>
        <NavButton $w={30} aria-label="Back"><Arrow d="M13 7H1m5-5L1 7l5 5" /></NavButton>
        <NavButton $w={26} aria-label="Forward"><Arrow d="M1 7h12M8 2l5 5-5 5" color="#ccc" /></NavButton>
        <NavButton $w={18} aria-label="Recent"><Chevron color="#777" /></NavButton>
        <NavButton $w={20} aria-label="Up"><Arrow d="M7 13V1M2 6l5-5 5 5" /></NavButton>
        <Crumbs>
          <Icon w={12} h={16} stroke="#e3b94a" fill="#ffe08c"><path d="M.5 .5h9v9h2v6H.5z" /></Icon>
          {['This PC', 'Downloads', 'SetForTrading', 'Scalperology AI'].map((c) => (
            <React.Fragment key={c}>
              <Chevron dir="right" color="#666" sw={1.2} />
              <a href="#path">{c}</a>
            </React.Fragment>
          ))}
          <CrumbEnd $first type="button" aria-label="History"><Chevron sw={1.6} /></CrumbEnd>
          <CrumbEnd type="button" aria-label="Refresh">
            <Icon w={12} h={12} stroke="#555" sw={1.4}><path d="M8.500 2.500A4.300 4.300 0 1 1 3.500 2.500M3.500 5V2H1" /></Icon>
          </CrumbEnd>
        </Crumbs>
        <Search>
          <Icon w={13} h={13} stroke="#777"><circle cx="8" cy="5" r="4" /><path d="M5 8L.5 12.500" /></Icon>
          <input placeholder="Search Scalperology AI" aria-label="Search" />
        </Search>
      </Address>
      <Commands>
        <button type="button">Organize <Caret color="#1e395b" /></button>
        <button type="button">New folder</button>
        <Spacer />
        <button type="button" aria-label="View">
          <Icon w={16} h={12} stroke="#888"><path d="M.5 .5h3v11h-3zM.5 4h3M.5 8h3" /><path d="M6 2h10M6 6h10M6 10h10" strokeDasharray="4 1" stroke="#555" /></Icon>
          <Caret color="#1e395b" />
        </button>
        <button type="button" aria-label="Preview pane">
          <Icon w={16} h={12} stroke="#777" fill="#fff"><path d="M.5 .5h15v11H.5z" /><path d="M9 1h6v10H9z" fill="#3b9ae8" stroke="none" /><path d="M0 1.500h16M5.500 1v10" /></Icon>
        </button>
        <button type="button" aria-label="Help">
          <Icon w={16} h={16} stroke="none" fill="#0a63c4">
            <circle cx="8" cy="8" r="8" />
            <text x="8" y="12" fontSize="12" fontWeight="700" fill="#fff" textAnchor="middle">?</text>
          </Icon>
        </button>
      </Commands>
      <Body>
        <Places>
          {places.map((p, i) => (
            <Place key={p} $on={p === 'Downloads'} $deep={i > 1 && p !== 'Network'} $gap={i === 1 || p === 'Network'}>
              <Icon w={16} h={16} stroke="none">{placeIcons[p]}</Icon>
              {p}
            </Place>
          ))}
        </Places>
        <Files>
          <colgroup><col width="258" /><col width="144" /><col width="120" /><col /></colgroup>
          <thead>
            <tr>
              <th><HeadCell $first>Name<Chevron dir="up" color="#777" /></HeadCell></th>
              <th><HeadCell>Date modified</HeadCell></th>
              <th><HeadCell>Type</HeadCell></th>
              <th><HeadCell>Size</HeadCell></th>
            </tr>
          </thead>
          <tbody>
            {files.map((f, i) => (
              <FileRow key={f} $on={i === 0}>
                <td><FileName><PageIcon />{f}</FileName></td>
                <td>6/30/2025 3:06 PM</td>
                <td>SET File</td>
                <td>3 KB</td>
              </FileRow>
            ))}
          </tbody>
        </Files>
        <Scroll $thumb={54}>
          <Chevron dir="up" sw={1.6} />
          <i />
          <Chevron sw={1.6} />
        </Scroll>
      </Body>
      <DialogFoot>
        <FootLine $gap={12}>
          <NameBox>
            File name:
            <span><input defaultValue="S1_AUDJPY_Complex.set" /><Chevron /></span>
          </NameBox>
          <SelectBox $w={188} $h={24}>
            <select aria-label="File type"><option>Expert Set (*.set)</option></select>
            <Chevron />
          </SelectBox>
        </FootLine>
        <FootLine $gap={14} $last>
          <DialogButton type="button" $main>Open</DialogButton>
          <DialogButton type="button">Cancel</DialogButton>
        </FootLine>
      </DialogFoot>
    </Dialog>
  );
}

function ContextMenu() {
  return (
    <Popup role="menu">
      <PopupItem $hot><i><Icon w={14} h={14} stroke="#2c9a10"><path d="M7 11V1M3 5l4-4 4 4M0 13.500h14" /></Icon></i>Load</PopupItem>
      <PopupItem><i><Icon w={16} h={16}><path d="M5 1C1 2 .5 4 .5 8s1 7.500 7.500 7.500S15.500 12 15.500 8 15 2 11 1M8 0v10M4.500 7L8 10.500 11.500 7" /></Icon></i>Save</PopupItem>
      <PopupItem><i />Save Version</PopupItem>
      <PopupItem><i><Icon w={14} h={12} stroke={GREEN} fill="#c8f5cf"><path d="M1 5l5-4v3c5 0 7 3 7 7h-2c0-3-2-4-5-4v2z" /></Icon></i>Defaults</PopupItem>
      <PopupLine />
      <PopupItem><i><Tick /></i>Auto Arrange<kbd>A</kbd></PopupItem>
      <PopupItem><i><Tick /></i>Grid<kbd>G</kbd></PopupItem>
      <PopupLine />
      <PopupItem><i><Icon w={9} h={10} stroke={GREEN} sw={1.2}><path d="M1 1v8l7-4z" /></Icon></i>Start Single Test</PopupItem>
    </Popup>
  );
}

export default function App() {
  return (
    <Page>
      <GlobalStyle />
      <TopBars />
      <Middle>
        <SidePanels />
        <ChartArea>
          <Chart />
          <ChartTabs>
            <Tab>USDCHF,H1</Tab>
            <TabLine />
            <Tab>GBPUSD,H1</Tab>
            <TabLine />
            <ChartScroll>
              <Icon w={5} h={7} stroke="none" fill="#b3b1b3"><path d="M4 0v7L0 3.500z" /></Icon>
              <Icon w={5} h={7} stroke="none" fill="#b3b1b3"><path d="M1 0v7l4-3.500z" /></Icon>
            </ChartScroll>
          </ChartTabs>
        </ChartArea>
      </Middle>
      <StrategyTester />
      <Status>
        For Help, press F1
        <Spacer />
        <StatusCell $w={129}>Default</StatusCell>
        <StatusCell $w={98} />
        <StatusCell $w={71} />
        <StatusCell $w={71} />
        <StatusCell $w={68} />
        <StatusCell $w={71} />
        <StatusCell $w={66} />
        <StatusCell $w={119}>
          <Icon w={10} h={10} stroke="none" fill="#e0352b"><circle cx="5" cy="5" r="5" /><path d="M2 4h6v2H2z" fill="#fff" /></Icon>
          176 / 62 Kb
        </StatusCell>
      </Status>
      <OpenDialog />
      <Callout>
        <svg width="440" height="264" viewBox="870 66 440 264" fill="#f9c72a">
          <path
            d="M1018 73H1283Q1303 74 1303 94L1297 211Q1295 231 1277 232H1072L877 324 1006 220 999 94Q1000 74 1018 73z"
            stroke="#fff"
            strokeWidth="4"
            strokeLinejoin="round"
          />
          <path d="M1018 73H1283Q1303 74 1303 94L1297 211Q1295 231 1277 232H1072L877 324 1006 220 999 94Q1000 74 1018 73z" />
        </svg>
        <p>Open the folder where you unzipped SetForTrading.zip.</p>
      </Callout>
      <Pin $x={828} $y={298}>2</Pin>
      <Pin $x={372} $y={951}>1</Pin>
      <ContextMenu />
      <Pointer $x={1011} $y={320} width="13" height="19" viewBox="0 0 13 19" fill="#fff" stroke="#222">
        <path d="M1 1v15l3.500-3.500L7 18l2-1-2.500-5.500H11.500z" />
      </Pointer>
      <Pointer $x={306} $y={1002} width="13" height="19" viewBox="0 0 13 19" fill="#000">
        <path d="M1 1v14l3-3 3 6 2-1-2.500-5.500H11z" />
      </Pointer>
    </Page>
  );
}
